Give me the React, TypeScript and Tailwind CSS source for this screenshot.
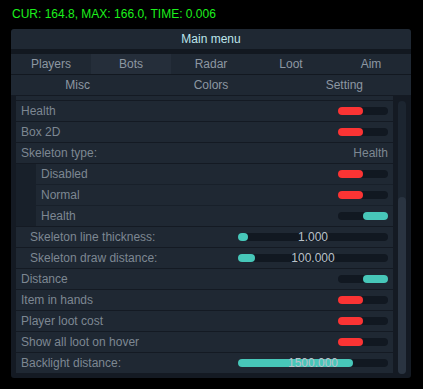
import React from "react";

const RED = "#fb3434";
const TEAL = "#47c7b9";
const TRACK = "#111821";
const ROW = "#1f2833";

function Toggle({ on }: { on: boolean }) {
  return (
    <div className="relative w-[50px] h-[8px] rounded-[4px] bg-[#111821]">
      <div
        className="absolute top-0 h-[8px] w-[25px] rounded-[4px]"
        style={{ left: on ? 25 : 0, background: on ? TEAL : RED }}
      />
    </div>
  );
}

function Slider({ fill, grab, value }: { fill?: number; grab?: number; value: string }) {
  return (
    <div className="relative w-[150px] h-[8px] rounded-[4px] bg-[#111821]">
      {fill !== undefined && (
        <div className="absolute left-0 top-0 h-[8px] rounded-[4px] bg-[#47c7b9]" style={{ width: fill }} />
      )}
      {grab !== undefined && (
        <div className="absolute left-0 top-0 h-[8px] rounded-[4px] bg-[#47c7b9]" style={{ width: grab }} />
      )}
      <div className="absolute inset-0 flex items-center justify-center text-[12px] leading-none text-[#b9c1c9]">
        {value}
      </div>
    </div>
  );
}

function Row({ label, children, pl = "pl-[5px]" }: { label: string; children?: React.ReactNode; pl?: string }) {
  return (
    <div className={`h-[20px] flex items-center justify-between bg-[#1f2833] pr-[5px] ${pl}`}>
      <span className="text-[12px] text-[#7d8792] leading-none">{label}</span>
      {children}
    </div>
  );
}

export default function App() {
  const tabs1 = ["Players", "Bots", "Radar", "Loot", "Aim"];
  const tabs2 = ["Misc", "Colors", "Setting"];
  return (
    <div
      className="w-[423px] h-[389px] bg-black overflow-hidden"
      style={{ fontFamily: '"Liberation Sans", Arial, sans-serif' }}
    >
      <div className="h-[29px] pl-[12px] pt-[7px] text-[12px] leading-[14px] text-[#1cf01c]">
        CUR: 164.8, MAX: 166.0, TIME: 0.006
      </div>
      <div className="ml-[11px] w-[400px] h-[349px] rounded-[3px] bg-[#141a23] flex flex-col overflow-hidden">
        <div className="h-[20px] bg-[#1f2833] rounded-t-[3px] flex items-center justify-center text-[12px] text-[#bde6ec]">
          Main menu
        </div>
        <div className="h-[5px] bg-[#121820]" />
        <div className="h-[20px] grid grid-cols-5 bg-[#1f2833]">
          {tabs1.map((t) => (
            <div
              key={t}
              className={`flex items-center justify-center text-[12px] text-[#8d97a2] ${t === "Bots" ? "bg-[#252e3a]" : ""}`}
            >
              {t}
            </div>
          ))}
        </div>
        <div className="h-[1px] bg-[#121820]" />
        <div className="h-[20px] grid grid-cols-3 bg-[#1f2833]">
          {tabs2.map((t) => (
            <div key={t} className="flex items-center justify-center text-[12px] text-[#8d97a2]">
              {t}
            </div>
          ))}
        </div>
        <div className="flex flex-1 pl-[5px] pt-[1px]">
          <div className="w-[377px] flex flex-col gap-px">
            <div className="h-[4px] bg-[#1f2833]" />
            <Row label="Health">
              <Toggle on={false} />
            </Row>
            <Row label="Box 2D">
              <Toggle on={false} />
            </Row>
            <Row label="Skeleton type:">
              <span className="text-[12px] text-[#7d8792] leading-none">Health</span>
            </Row>
            <div className="bg-[#18202a] pl-[20px] flex flex-col gap-px">
              <Row label="Disabled">
                <Toggle on={false} />
              </Row>
              <Row label="Normal">
                <Toggle on={false} />
              </Row>
              <Row label="Health">
                <Toggle on={true} />
              </Row>
            </div>
            <Row label="Skeleton line thickness:" pl="pl-[14px]">
              <Slider grab={10} value="1.000" />
            </Row>
            <Row label="Skeleton draw distance:" pl="pl-[14px]">
              <Slider grab={17} value="100.000" />
            </Row>
            <Row label="Distance">
              <Toggle on={true} />
            </Row>
            <Row label="Item in hands">
              <Toggle on={false} />
            </Row>
            <Row label="Player loot cost">
              <Toggle on={false} />
            </Row>
            <Row label="Show all loot on hover">
              <Toggle on={false} />
            </Row>
            <Row label="Backlight distance:">
              <Slider fill={115} value="1500.000" />
            </Row>
          </div>
          <div className="ml-[5px] pt-[5px]">
            <div className="relative w-[8px] h-[273px] rounded-[4px] bg-[#1c2530]">
              <div className="absolute left-0 bottom-0 w-[8px] h-[177px] rounded-[4px] bg-[#2a3441]" />
            </div>
          </div>
        </div>
      </div>
    </div>
  );
}
